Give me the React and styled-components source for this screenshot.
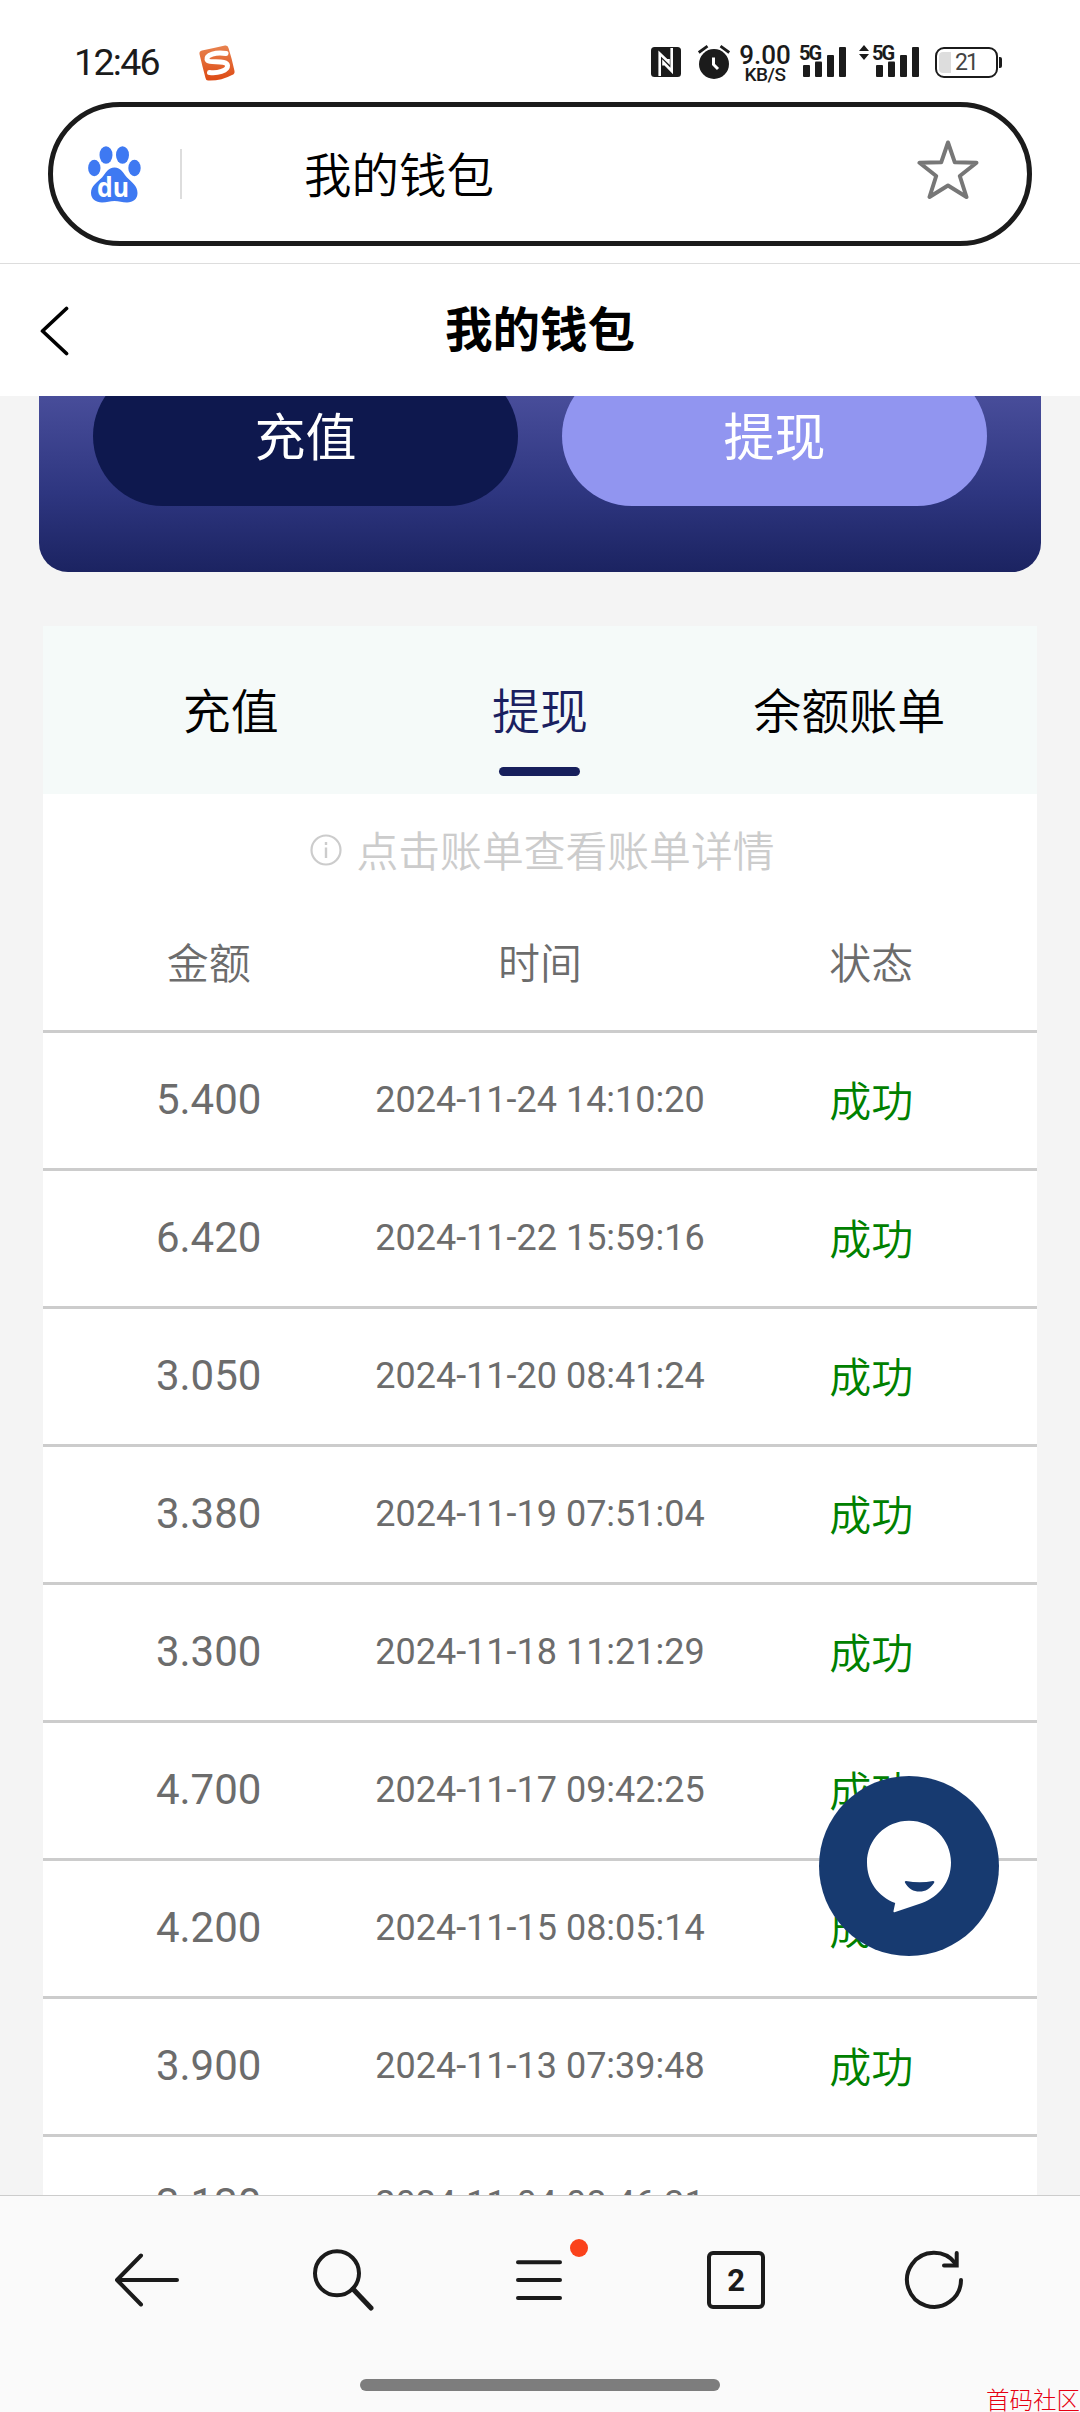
import React from "react";
import styled, { createGlobalStyle } from "styled-components";

const records = [
    { amount: "5.400", time: "2024-11-24 14:10:20", status: "成功" },
    { amount: "6.420", time: "2024-11-22 15:59:16", status: "成功" },
    { amount: "3.050", time: "2024-11-20 08:41:24", status: "成功" },
    { amount: "3.380", time: "2024-11-19 07:51:04", status: "成功" },
    { amount: "3.300", time: "2024-11-18 11:21:29", status: "成功" },
    { amount: "4.700", time: "2024-11-17 09:42:25", status: "成功" },
    { amount: "4.200", time: "2024-11-15 08:05:14", status: "成功" },
    { amount: "3.900", time: "2024-11-13 07:39:48", status: "成功" },
    { amount: "3.130", time: "2024-11-04 08:46:31", status: "" },
];

function Signal() {
    return (
        <svg width="43" height="34" viewBox="0 0 43 34" fill="#1b1b1b">
            <rect x="0" y="20" width="7" height="12" rx="1" />
            <rect x="12" y="16.5" width="7" height="15.5" rx="1" />
            <rect x="24" y="10" width="7" height="22" rx="1" />
            <rect x="36" y="2" width="7" height="30" rx="1" />
        </svg>
    )
}

function StatusBar() {
    return (
        <StyledStatus>
            <Clock>12:46</Clock>
            <svg width="36" height="36" viewBox="0 0 36 36">
                <defs>
                    <linearGradient id="sg" x1="0" y1="0" x2="0" y2="1">
                        <stop offset="0" stopColor="#e8834f" />
                        <stop offset="1" stopColor="#dd4a14" />
                    </linearGradient>
                </defs>
                <path fill="url(#sg)" d="M3 5.500Q15 3 26 .5Q29 0 29.500 3Q33 14 35.500 26Q36 29 33 30Q22 36 9 35.500Q7 35.500 6.500 33Q3 20 .5 9Q0 6 3 5.500Z" />
                <path fill="none" stroke="#fff" strokeWidth="5" strokeLinecap="round" d="M27 8.500C17 6.500 7 10 8 14.500C9 19 28 14 28.500 20.500C29 26 18 28.500 10.500 27.500" />
            </svg>
            <StatusIcons>
                <svg width="30" height="30" viewBox="0 0 30 30">
                    <rect width="30" height="30" rx="3.500" fill="#1b1b1b" />
                    <path fill="none" stroke="#fff" strokeWidth="2.600" d="M8.700 29V6.500L17.500 15V12M20.700 1V24L12.500 15.500V18.500" />
                </svg>
                <Alarm width="32" height="34" viewBox="0 0 32 34">
                    <circle cx="16" cy="19" r="15" fill="#1b1b1b" />
                    <path fill="none" stroke="#1b1b1b" strokeWidth="2.800" d="M.8 7.500L9.500 1.200M31.200 7.500L22.500 1.200" />
                    <path fill="none" stroke="#fff" strokeWidth="3" d="M15.500 12.500V19.500L20 24" />
                </Alarm>
                <NetSpeed>
                    <b>9.00</b>
                    <span>KB/S</span>
                </NetSpeed>
                <Sim>
                    <SimTag>5G</SimTag>
                    <Signal />
                </Sim>
                <SimArrows width="10" height="15" viewBox="0 0 10 15" fill="#1b1b1b">
                    <path d="M5 0L10 6H0ZM5 15L10 9H0Z" />
                </SimArrows>
                <Sim>
                    <SimTag>5G</SimTag>
                    <Signal />
                </Sim>
                <Battery>
                    <Charge />
                    21
                    <Nub />
                </Battery>
            </StatusIcons>
        </StyledStatus>
    )
}

function SearchBar() {
    return (
        <StyledSearch>
            <svg width="53" height="57" viewBox="0 0 53 57">
                <g fill="#3e79f2">
                    <ellipse cx="18" cy="9" rx="6.500" ry="8.800" />
                    <ellipse cx="34.500" cy="9" rx="6.500" ry="8.800" />
                    <ellipse cx="6.300" cy="22" rx="6.200" ry="8.200" />
                    <ellipse cx="46.500" cy="22" rx="6.200" ry="8.200" />
                    <path d="M26.500 21.500C33 21.500 35 27 39 31.500C44 36.500 49.500 40 49.500 47C49.500 53 45 56.500 39 56.500C34 56.500 31 55 26.500 55C22 55 19 56.500 14 56.500C8 56.500 3 53 3 47C3 40 9 36.500 14 31.500C18 27 20 21.500 26.500 21.500Z" />
                </g>
                <text x="9" y="51" textLength="32" lengthAdjust="spacingAndGlyphs" fontFamily="Open Sans, sans-serif" fontWeight="700" fontSize="26" fill="#fff">du</text>
            </svg>
            <Divider />
            <SearchText>我的钱包</SearchText>
            <Star width="62" height="60" viewBox="0 0 62 60">
                <path fill="none" stroke="#777" strokeWidth="4" strokeLinejoin="round" d="M31 2.500L37.800 22.300L59.500 22.800L42.800 36L49.500 57L31 45.500L12.500 57L19.200 36L2.500 22.800L24.200 22.300Z" />
            </Star>
        </StyledSearch>
    )
}

function ChatButton() {
    return (
        <StyledChat>
            <svg width="180" height="180" viewBox="0 0 180 180">
                <path fill="#fff" d="M90 44.700C113.500 44.700 132 63.500 132 86.500C132 106 120 120.500 103 127L75.500 136.300Q74.200 136.600 74.500 135L76.200 127C59 120.500 48 105.500 48 86.500C48 63.500 66.500 44.700 90 44.700Z" />
                <path fill="#173a70" d="M87 105Q101 107.500 114 105Q116 105 115 107C111 113 106.500 115.500 100.500 115.500C94.500 115.500 89.500 113 86.200 107Q85.200 105 87 105Z" />
            </svg>
        </StyledChat>
    )
}

function BottomNav() {
    return (
        <StyledNav>
            <NavIcons>
                <svg width="66" height="64" viewBox="0 0 66 64">
                    <path d="M63 32H3M27 7.500L3 32L27 56.500" />
                </svg>
                <svg width="66" height="64" viewBox="0 0 66 64">
                    <circle cx="26" cy="25.300" r="22" />
                    <path strokeWidth="5" d="M42 41L60 60" />
                </svg>
                <MenuIcon>
                    <svg width="66" height="64" viewBox="0 0 66 64">
                        <path d="M10 14.300H52M10 32H52M10 50H52" />
                    </svg>
                    <RedDot />
                </MenuIcon>
                <TabCount>2</TabCount>
                <svg width="66" height="64" viewBox="0 0 66 64">
                    <path d="M60 32A27 27 0 1 1 54.500 15.500" />
                    <path strokeLinejoin="miter" d="M55.700 5V17.500H43" />
                </svg>
            </NavIcons>
            <HomeBar />
            <Watermark>首码社区</Watermark>
        </StyledNav>
    )
}

function App() {
    return (
        <Phone>
            <GlobalStyle />
            <StatusBar />
            <SearchBar />
            <Header>
                <svg width="30" height="50" viewBox="0 0 30 50">
                    <path fill="none" stroke="#000" strokeWidth="3.700" strokeLinecap="round" strokeLinejoin="round" d="M26.500 2.500L2.500 25L26.500 47.500" />
                </svg>
                <h1>我的钱包</h1>
            </Header>
            <Content>
                <Card>
                    <PillButton $color="#0e184e">充值</PillButton>
                    <PillButton $color="#9195f0">提现</PillButton>
                </Card>
                <Panel>
                    <Tabs>
                        <Tab>充值</Tab>
                        <Tab $active>提现</Tab>
                        <Tab>余额账单</Tab>
                    </Tabs>
                    <Hint>
                        <svg width="32" height="32" viewBox="0 0 32 32">
                            <circle cx="16" cy="16" r="14.500" fill="none" stroke="#ccc" strokeWidth="2.200" />
                            <path stroke="#ccc" strokeWidth="2.400" d="M16 13.500V24M16 8V11" />
                        </svg>
                        <span>点击账单查看账单详情</span>
                    </Hint>
                    <HeadRow>
                        <span>金额</span>
                        <span>时间</span>
                        <span>状态</span>
                    </HeadRow>
                    {records.map((item) => (
                        <Row key={item.time}>
                            <span>{item.amount}</span>
                            <Time>{item.time}</Time>
                            <Status>{item.status}</Status>
                        </Row>
                    ))}
                </Panel>
            </Content>
            <BottomNav />
            <ChatButton />
        </Phone>
    )
}

export default App;

const GlobalStyle = createGlobalStyle`
    * {
        box-sizing: border-box;
    }

    body {
        margin: 0;
        background: #fff;
        font-family: Roboto, "Noto Sans CJK SC", sans-serif;
    }

    svg {
        display: block;
        flex: none;
    }
`;

const Phone = styled.div`
    position: relative;
    display: flex;
    flex-direction: column;
    width: 1080px;
    height: 2412px;
    overflow: hidden;
`;

const StyledStatus = styled.div`
    display: flex;
    align-items: flex-start;
    height: 102px;
    padding: 45px 78px 0 74px;
    color: #1b1b1b;
`;

const Clock = styled.div`
    width: 125px;
    font-size: 37.5px;
    line-height: 35px;
    letter-spacing: -1.7px;
`;

const StatusIcons = styled.div`
    display: flex;
    align-items: flex-start;
    margin-left: auto;

    > svg:first-child {
        margin-top: 2px;
    }
`;

const Alarm = styled.svg`
    margin-left: 17px;
`;

const NetSpeed = styled.div`
    display: flex;
    flex-direction: column;
    align-items: center;
    width: 52px;
    margin-left: 9px;

    b {
        font-size: 26px;
        font-weight: 500;
        line-height: 20px;
    }

    span {
        font-size: 19px;
        font-weight: 500;
        line-height: 19px;
        letter-spacing: -0.5px;
    }
`;

const Sim = styled.div`
    position: relative;
    padding-left: 4px;
    margin-left: 8px;
`;

const SimTag = styled.span`
    position: absolute;
    left: 0;
    top: 0;
    font-size: 20px;
    font-weight: 700;
    line-height: 16px;
    letter-spacing: -2px;
`;

const SimArrows = styled.svg`
    margin: 0 -5px 0 13px;
`;

const Battery = styled.div`
    position: relative;
    display: flex;
    align-items: center;
    gap: 4px;
    width: 63px;
    height: 31px;
    margin: 2px 4px 0 16px;
    padding-left: 2px;
    border: 2.5px solid #1b1b1b;
    border-radius: 9px;
    color: #444;
    font-size: 23px;
    letter-spacing: -2px;
`;

const Charge = styled.i`
    width: 12px;
    height: 21px;
    border-radius: 4px 0 0 4px;
    background: #ddd;
`;

const Nub = styled.i`
    position: absolute;
    right: -6px;
    top: 8px;
    width: 3px;
    height: 11px;
    border-radius: 0 2px 2px 0;
    background: #1b1b1b;
`;

const StyledSearch = styled.div`
    display: flex;
    align-items: center;
    flex: none;
    height: 144px;
    margin: 0 48px 17px;
    padding: 0 48px 0 35px;
    border: 5px solid #1b1b1b;
    border-radius: 72px;
`;

const Divider = styled.i`
    width: 2px;
    height: 50px;
    margin-left: 39px;
    background: #ddd;
`;

const SearchText = styled.div`
    flex: 1;
    margin-left: 122px;
    padding-top: 5px;
    color: #000;
    font-size: 47.5px;
    font-weight: 350;
    line-height: 60px;
`;

const Star = styled.svg`
    margin-bottom: 8px;
`;

const Header = styled.div`
    display: flex;
    align-items: center;
    flex: none;
    height: 133px;
    padding: 2px 0 0 40px;
    border-top: 1px solid #ddd;

    h1 {
        flex: 1;
        margin: 0 70px 0 0;
        font-size: 47.5px;
        font-weight: 700;
        line-height: 60px;
        text-align: center;
    }
`;

const Content = styled.div`
    height: 1799px;
    overflow: hidden;
    background: #f4f4f4;
`;

const Card = styled.div`
    display: flex;
    gap: 44px;
    height: 176px;
    margin: 0 39px 54px;
    padding: 0 54px;
    border-radius: 0 0 29px 29px;
    background: linear-gradient(#484d9a, #2e3680 55%, #1b2361);
    overflow: hidden;
`;

const PillButton = styled.div`
    display: flex;
    align-items: center;
    justify-content: center;
    flex: 1;
    height: 140px;
    margin-top: -30px;
    padding-bottom: 4px;
    border-radius: 70px;
    background: ${(props) => props.$color};
    color: #fff;
    font-size: 51px;
`;

const Panel = styled.div`
    margin: 0 43px;
    background: #fff;
    color: #6c6c6c;
    font-size: 42px;
`;

const Tabs = styled.div`
    display: flex;
    height: 168px;
    padding: 0 33px;
    background: #f5faf9;
`;

const Tab = styled.div`
    position: relative;
    flex: 1;
    color: ${(props) => (props.$active ? "#1a2060" : "#000")};
    font-size: 48px;
    font-weight: 350;
    line-height: 174px;
    text-align: center;

    &::after {
        content: "";
        display: ${(props) => (props.$active ? "block" : "none")};
        position: absolute;
        left: 50%;
        bottom: 18px;
        width: 81px;
        height: 9px;
        margin-left: -40.5px;
        border-radius: 5px;
        background: #171f5c;
    }
`;

const Hint = styled.div`
    display: flex;
    align-items: center;
    justify-content: center;
    gap: 15px;
    height: 114px;
    padding: 0 0 2px 4px;
    color: #ccc;
    font-size: 41.8px;
    font-weight: 350;

    span {
        padding-bottom: 2px;
    }
`;

const HeadRow = styled.div`
    display: grid;
    grid-template-columns: repeat(3, 1fr);
    align-items: center;
    height: 125px;
    padding-bottom: 18px;
    border-bottom: 3px solid #ccc;
    font-weight: 350;
    text-align: center;
`;

const Row = styled.div`
    display: grid;
    grid-template-columns: repeat(3, 1fr);
    align-items: center;
    height: 138px;
    padding-bottom: 2px;
    border-bottom: 3px solid #ccc;
    line-height: 60px;
    text-align: center;
`;

const Time = styled.span`
    font-size: 36px;
`;

const Status = styled.span`
    padding-top: 6px;
    color: #008000;
    font-weight: 350;
`;

const StyledChat = styled.div`
    position: absolute;
    left: 819px;
    top: 1776px;
    width: 180px;
    height: 180px;
    border-radius: 50%;
    background: #173a70;
`;

const StyledNav = styled.div`
    position: relative;
    flex: 1;
    padding-top: 52px;
    border-top: 1px solid #ccc;
    background: #fafafa;
`;

const NavIcons = styled.div`
    display: flex;
    justify-content: space-between;
    height: 64px;
    padding: 0 113px 0 114px;

    svg {
        fill: none;
        stroke: #1b1b1b;
        stroke-width: 4;
        stroke-linecap: round;
        stroke-linejoin: round;
    }
`;

const MenuIcon = styled.div`
    position: relative;
`;

const RedDot = styled.i`
    position: absolute;
    right: -14px;
    top: -9px;
    width: 18px;
    height: 18px;
    border-radius: 50%;
    background: #fa421b;
`;

const TabCount = styled.div`
    width: 58px;
    height: 58px;
    margin: 3px 5px 0 3px;
    border: 4px solid #1b1b1b;
    border-radius: 6px;
    color: #1b1b1b;
    font-size: 31px;
    font-weight: 700;
    line-height: 52px;
    text-align: center;
`;

const HomeBar = styled.div`
    width: 360px;
    height: 12px;
    margin: 67px auto 0;
    border-radius: 6px;
    background: #7d7d7d;
`;

const Watermark = styled.div`
    position: absolute;
    right: 0;
    bottom: -4px;
    color: #e60012;
    font-size: 23.5px;
    font-weight: 300;
    line-height: 30px;
`;
